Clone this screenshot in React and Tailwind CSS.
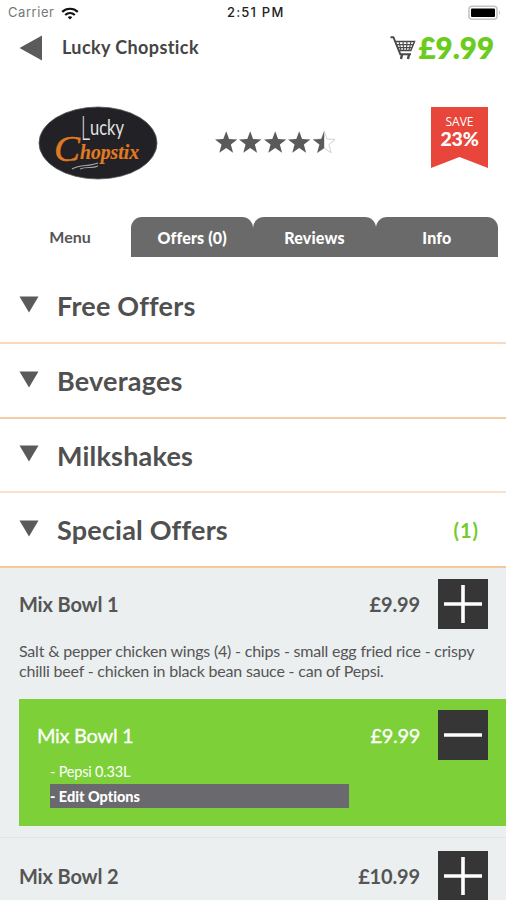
import React from 'react'

const TABS = ['Offers (0)', 'Reviews', 'Info']

const CATEGORIES = [
  { name: 'Free Offers', row: 'h-[75px] border-[#fbd9be]' },
  { name: 'Beverages', row: 'h-[75px] border-[#f5cba4]' },
  { name: 'Milkshakes', row: 'h-[74px] border-[#fce0cb]' },
  { name: 'Special Offers', row: 'h-[75px] border-[#f7c79c]', count: 1 }
]

const STAR = 'M12 0 L15.1 8.3 L24 8.7 L17 14.2 L19.4 23 L12 18 L4.6 23 L7 14.2 L0 8.7 L8.9 8.3 Z'

function StatusBar() {
  return (
    <div className="relative flex h-[26px] items-center justify-between pl-2 pr-1 font-['Inter'] text-[13px] text-[#222]">
      <div className="flex items-center gap-[7px]">
        <span className="tracking-[0.55px] text-[#777]">Carrier</span>
        <svg width="18" height="13" viewBox="0 0 18 13" fill="none" stroke="#111" strokeWidth="2.2">
          <path d="M1.2 4.9 C5.5 0.7 12.5 0.7 16.8 4.9" />
          <path d="M4.2 8 C7 5.4 11 5.4 13.8 8" />
          <path d="M9 12.5 L6.7 10.2 C8 9 10 9 11.3 10.2 Z" fill="#111" stroke="none" />
        </svg>
      </div>
      <span className="absolute left-[227px] font-medium tracking-[1.2px]">2:51 PM</span>
      <svg width="34" height="16" viewBox="0 0 34 16">
        <rect x="1" y="1.2" width="28" height="13" rx="3" fill="#fff" stroke="#c4c4c4" strokeWidth="1.6" />
        <rect x="3" y="3.4" width="24" height="8.6" rx="1" fill="#000" />
        <path d="M31 5.5 Q33.2 7.7 31 10 Z" fill="#c4c4c4" />
      </svg>
    </div>
  )
}

function CartIcon() {
  return (
    <svg width="26" height="24" viewBox="0 0 26 24" fill="none" stroke="#4a4a4a" strokeWidth="1.5">
      <path d="M0.5 1.2 H3.4 L10.3 18.2 H21" strokeWidth="1.9" />
      <path d="M4.8 5.5 H24.5 L20.8 14.6 H8.5" />
      <path d="M6.2 8.6 H23 M7.3 11.6 H22" strokeWidth="1.1" />
      <path d="M9 5.5 L11 14.6 M13 5.5 L13.7 14.6 M17 5.5 L16.4 14.6 M21 5.5 L18.9 14.6" strokeWidth="1.1" />
      <path d="M12 18.5 L11 23 M19 18.5 L18 23" strokeWidth="2.4" />
    </svg>
  )
}

function Header() {
  return (
    <header className="flex h-[43px] items-center pl-[19px] pr-[12px]">
      <svg width="24" height="26" viewBox="0 0 24 26" className="shrink-0">
        <path d="M0.5 13 L23 0.5 V25.5 Z" fill="#5b5b5b" />
      </svg>
      <h1 className="ml-[19px] text-[18px] font-bold tracking-[0.4px] text-[#454545]">Lucky Chopstick</h1>
      <div className="ml-auto flex items-center gap-[3px]">
        <CartIcon />
        <span className="text-[29.5px] font-extrabold leading-none text-[#6ccc1e]">£9.99</span>
      </div>
    </header>
  )
}

function Logo() {
  return (
    <svg width="120" height="74" viewBox="0 0 120 74">
      <ellipse cx="60" cy="37" rx="59" ry="36" fill="#212126" stroke="#55555a" strokeWidth="0.8" />
      <g fontFamily="Lato, sans-serif" fill="#e4e4e4">
        <text x="43" y="34" fontSize="33" fontWeight="300" textLength="9" lengthAdjust="spacingAndGlyphs">L</text>
        <text x="52" y="29" fontSize="22" textLength="34" lengthAdjust="spacingAndGlyphs">ucky</text>
      </g>
      <g fontFamily="'Liberation Serif', serif" fontStyle="italic" fill="#e07a23" stroke="#e07a23">
        <text x="16" y="55" fontSize="35" strokeWidth="0.4" textLength="26" lengthAdjust="spacingAndGlyphs">C</text>
        <text x="42" y="53" fontSize="22" fontWeight="700" strokeWidth="0.2" textLength="59" lengthAdjust="spacingAndGlyphs">hopstix</text>
      </g>
      <path d="M34 63 C43 58 50 61 60 57 M42 63 C49 60 54 63 60 60" fill="none" stroke="#aaa" strokeWidth="1.1" />
    </svg>
  )
}

function Rating() {
  return (
    <div className="flex gap-[2px]">
      {[0, 1, 2, 3].map((i) => (
        <svg key={i} width="22.4" height="23" viewBox="0 0 24 24">
          <path d={STAR} fill="#5a5a5a" />
        </svg>
      ))}
      <svg width="22.4" height="23" viewBox="0 0 24 24">
        <path d={STAR} fill="#fff" stroke="#c8c8c8" strokeWidth="0.9" />
        <path d="M12 0 V18 L4.6 23 L7 14.2 L0 8.7 L8.9 8.3 Z" fill="#5a5a5a" />
      </svg>
    </div>
  )
}

function SaveRibbon() {
  return (
    <div className="flex h-[61px] w-[57px] flex-col items-center bg-[#e8463a] pt-[8px] text-white [clip-path:polygon(0_0,100%_0,100%_100%,50%_82%,0_100%)]">
      <span className="font-['Open_Sans'] text-[12px] leading-[14px]">SAVE</span>
      <span className="text-[19.5px] font-black leading-[19px] tracking-[-0.2px]">23%</span>
    </div>
  )
}

function Tabs() {
  return (
    <nav className="flex h-10 pl-[9px] pr-2 text-[16px]">
      <div className="flex w-[122px] items-center justify-center font-bold text-[#555]">Menu</div>
      {TABS.map((tab) => (
        <div
          key={tab}
          className="flex flex-1 items-center justify-center rounded-t-[11px] bg-[#6a6a6b] pt-px font-black tracking-[0.15px] text-white"
        >
          {tab}
        </div>
      ))}
    </nav>
  )
}

function CategoryRow({ name, row, count }) {
  return (
    <div className={`flex items-center border-b-2 pl-[19px] pr-[27px] ${row}`}>
      <svg width="20" height="17" viewBox="0 0 20 17" className="-mt-[3px]">
        <path d="M0.5 0.5 H19.5 L10 16.5 Z" fill="#5a5a5a" />
      </svg>
      <h2 className="ml-[18px] pt-[2px] text-[27px] font-bold tracking-[0.2px] text-[#505050] [font-variant-ligatures:none]">
        {name}
      </h2>
      {count && <span className="ml-auto text-[20px] font-bold tracking-[1px] text-[#72cd2b]">({count})</span>}
    </div>
  )
}

function QtyButton({ minus }) {
  return (
    <button className="flex size-[50px] shrink-0 items-center justify-center bg-[#363636]">
      <svg width="40" height="40" viewBox="0 0 40 40" stroke="#fff" strokeWidth="3.6">
        <path d="M1 20 H39" />
        {!minus && <path d="M20 1 V39" />}
      </svg>
    </button>
  )
}

function ItemLine({ name, price, minus, className }) {
  return (
    <div className={`flex items-center pr-[18px] text-[20px] ${className}`}>
      <span>{name}</span>
      <span className="ml-auto mr-[18px]">{price}</span>
      <QtyButton minus={minus} />
    </div>
  )
}

export default function App() {
  return (
    <div className="h-[900px] w-[506px] overflow-hidden bg-white font-['Lato',sans-serif]">
      <StatusBar />
      <Header />
      <div className="flex items-start pl-[38px] pr-[18px] pt-[37px]">
        <Logo />
        <div className="ml-[57px] mt-[25px]">
          <Rating />
        </div>
        <div className="ml-auto mt-px">
          <SaveRibbon />
        </div>
      </div>
      <div className="mt-[37px]">
        <Tabs />
      </div>
      <div className="pt-[12px]">
        {CATEGORIES.map((c) => (
          <CategoryRow key={c.name} {...c} />
        ))}
      </div>
      <section className="h-[332px] bg-[#ebeff0] pt-[11px]">
        <ItemLine name="Mix Bowl 1" price="£9.99" className="pl-[19px] font-bold tracking-[-0.15px] text-[#555]" />
        <p className="mt-[12px] pl-[19px] text-[16px] leading-5 tracking-[-0.2px] text-[#555] [font-variant-ligatures:none]">
          Salt &amp; pepper chicken wings (4) - chips - small egg fried rice - crispy
          <br />
          chilli beef - chicken in black bean sauce - can of Pepsi.
        </p>
        <div className="ml-[19px] mt-[18px] h-[127px] bg-[#7dd038] pt-[11px]">
          <ItemLine minus name="Mix Bowl 1" price="£9.99" className="pl-[18px] tracking-[-0.3px] text-white [&>span]:[-webkit-text-stroke:0.3px_white]" />
          <div className="ml-[31px] w-[299px] text-[14.5px] text-white">
            <div className="flex h-6 items-center tracking-[-0.2px]">- Pepsi 0.33L</div>
            <div className="flex h-6 items-center bg-[#6a696d] pt-px font-black [font-variant-ligatures:none]">- Edit Options</div>
          </div>
        </div>
        <div className="mt-[11px] border-t border-[#e0e5e7] pt-[13px]">
          <ItemLine name="Mix Bowl 2" price="£10.99" className="pl-[19px] font-bold tracking-[-0.15px] text-[#555]" />
        </div>
      </section>
    </div>
  )
}
